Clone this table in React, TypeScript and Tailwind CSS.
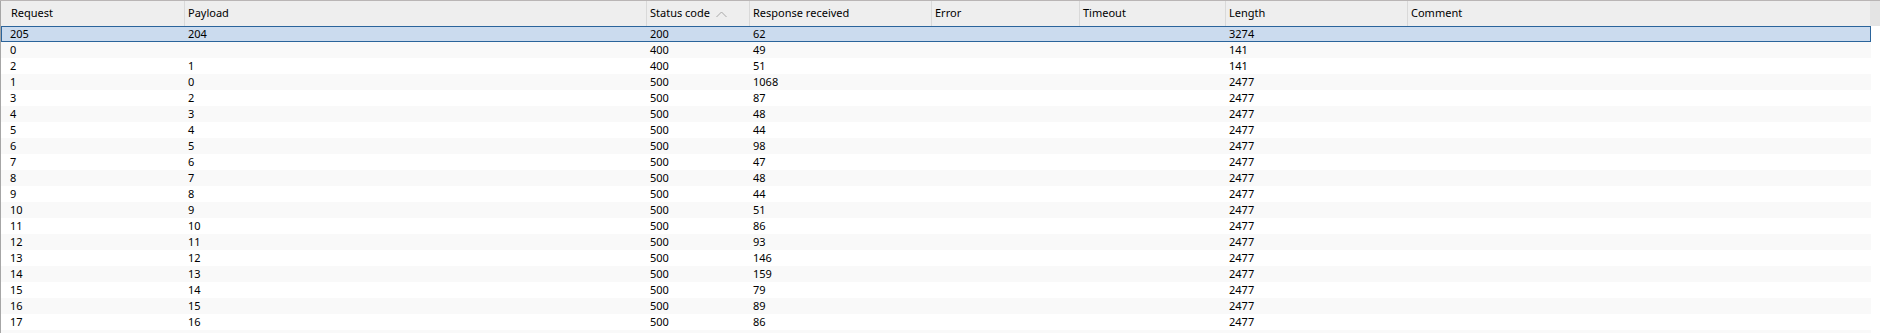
const columns = [
  "Request",
  "Payload",
  "Status code",
  "Response received",
  "Error",
  "Timeout",
  "Length",
  "Comment",
];

const rows: string[][] = [
  ["205", "204", "200", "62", "", "", "3274", ""],
  ["0", "", "400", "49", "", "", "141", ""],
  ["2", "1", "400", "51", "", "", "141", ""],
  ["1", "0", "500", "1068", "", "", "2477", ""],
  ["3", "2", "500", "87", "", "", "2477", ""],
  ["4", "3", "500", "48", "", "", "2477", ""],
  ["5", "4", "500", "44", "", "", "2477", ""],
  ["6", "5", "500", "98", "", "", "2477", ""],
  ["7", "6", "500", "47", "", "", "2477", ""],
  ["8", "7", "500", "48", "", "", "2477", ""],
  ["9", "8", "500", "44", "", "", "2477", ""],
  ["10", "9", "500", "51", "", "", "2477", ""],
  ["11", "10", "500", "86", "", "", "2477", ""],
  ["12", "11", "500", "93", "", "", "2477", ""],
  ["13", "12", "500", "146", "", "", "2477", ""],
  ["14", "13", "500", "159", "", "", "2477", ""],
  ["15", "14", "500", "79", "", "", "2477", ""],
  ["16", "15", "500", "89", "", "", "2477", ""],
  ["17", "16", "500", "86", "", "", "2477", ""],
  ["", "", "", "", "", "", "", ""],
];

const grid =
  "grid grid-cols-[183px_462px_103px_182px_148px_146px_182px_464px] w-[1870px]";

function SortArrow() {
  return (
    <svg width="11" height="7" viewBox="0 0 11 7" className="ml-[6px] mt-[1px]">
      <path d="M0.5 6 L5.5 1 L10.5 6" fill="none" stroke="#a8a8a8" strokeWidth="1" />
    </svg>
  );
}

export default function App() {
  return (
    <div
      className="w-[1880px] h-[333px] overflow-hidden bg-white text-[11px] text-black"
      style={{ fontFamily: '"Noto Sans", "Open Sans", sans-serif' }}
    >
      {/* Header */}
      <div className="flex border-t border-[#b9b5b5]">
        <div className={`${grid} h-[25px] bg-[#eeeeee] border-l border-[#a6a6a6]`}>
          {columns.map((c, i) => (
            <div
              key={c}
              className={`flex items-center h-full ${
                i === 0 ? "pl-[10px]" : "pl-[3px] border-l border-[#d9d9d9]"
              }`}
            >
              {c}
              {c === "Status code" && <SortArrow />}
            </div>
          ))}
        </div>
        <div className="w-[10px] h-[25px] bg-[#e4e4e4]" />
      </div>

      {/* Rows */}
      <div className="flex flex-col border-l border-[#a6a6a6] w-[1870px]">
        {rows.map((r, idx) => (
          <div
            key={idx}
            className={`${grid} h-[16px] items-center ${
              idx === 0
                ? "bg-[#cbdbee] outline outline-1 -outline-offset-1 outline-[#2b649b]"
                : idx % 2 === 1
                ? "bg-[#f9f9f9]"
                : "bg-white"
            }`}
          >
            {r.map((v, i) => (
              <div
                key={i}
                className={`leading-[16px] ${i === 0 ? "pl-[9px]" : "pl-[4px]"}`}
              >
                {v}
              </div>
            ))}
          </div>
        ))}
      </div>
    </div>
  );
}
